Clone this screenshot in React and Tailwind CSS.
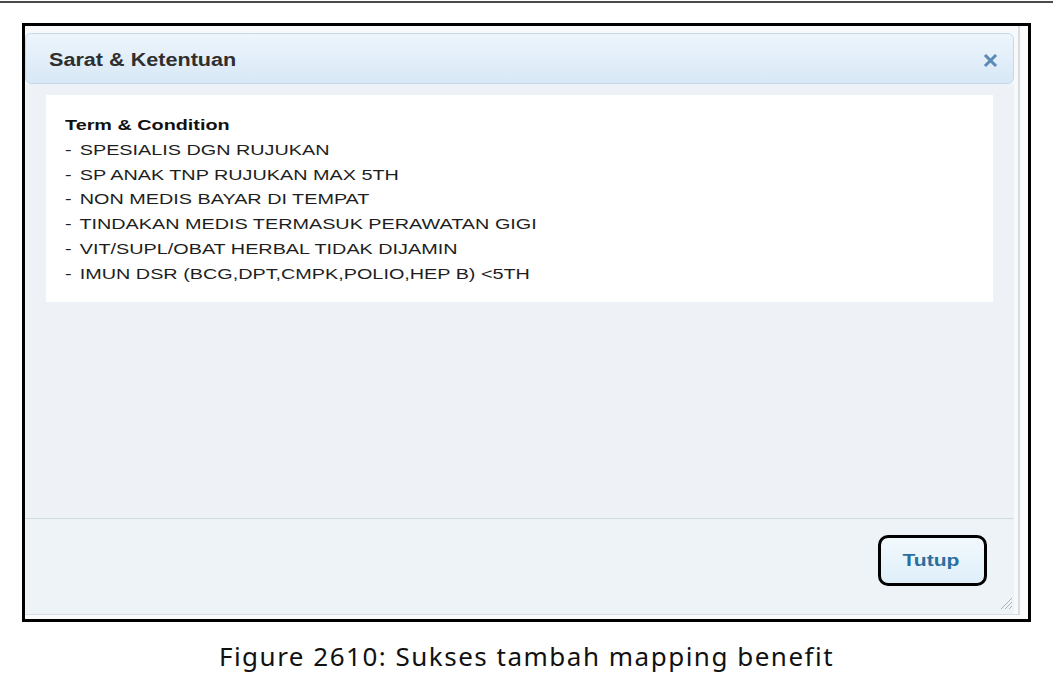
const TERMS = [
  "SPESIALIS DGN RUJUKAN",
  "SP ANAK TNP RUJUKAN MAX 5TH",
  "NON MEDIS BAYAR DI TEMPAT",
  "TINDAKAN MEDIS TERMASUK PERAWATAN GIGI",
  "VIT/SUPL/OBAT HERBAL TIDAK DIJAMIN",
  "IMUN DSR (BCG,DPT,CMPK,POLIO,HEP B) <5TH",
];

function CloseIcon() {
  return (
    <svg width="15" height="15" viewBox="0 0 15 15">
      <path d="M3 3 L12 12 M12 3 L3 12" stroke="#5b8ab5" strokeWidth="3" strokeLinecap="square" />
    </svg>
  );
}

function ResizeGrip() {
  return (
    <svg width="16" height="16" viewBox="0 0 16 16">
      <path d="M15 4 L4 15 M15 8 L8 15 M15 12 L12 15" stroke="#a9b3bc" strokeWidth="1" />
    </svg>
  );
}

function Dialog() {
  return (
    <div className="flex h-[589px] w-[995px] flex-col border-r-[2px] border-b border-[#d9dde1] bg-[#f7f9fb] pt-[7px] pr-[4px]">
      <div className="flex h-[51px] items-center justify-between rounded-[6px] border border-[#c5d9ea] bg-gradient-to-b from-[#edf5fc] to-[#d8e8f6] pt-[3px] pl-[23px] pr-[15px]">
        <span className="inline-block origin-left scale-x-[1.2] text-[18px] font-bold text-[#2f2f2f]">
          Sarat &amp; Ketentuan
        </span>
        <CloseIcon />
      </div>

      <div className="h-[434px] bg-[#eef2f6] px-[21px] pt-[11px]">
        <div className="h-[207px] bg-white pl-[19px] pt-[18px]">
          <div className="origin-left scale-x-[1.32] text-[15px] leading-[24.8px] text-[#1e1e1e]">
            <div className="font-bold text-[#111]">Term &amp; Condition</div>
            {TERMS.map((t) => (
              <div key={t}>
                <span className="mr-[2px]">-</span> {t}
              </div>
            ))}
          </div>
        </div>
      </div>

      <div className="relative flex flex-1 items-start justify-end border-t border-[#d2dae1] bg-[#eef3f7] pt-[16px] pr-[27px]">
        <button className="h-[51px] w-[109px] rounded-[10px] border-[3px] border-black bg-gradient-to-b from-[#f2f9fd] to-[#dfeff9] pr-[3px] text-[17px] font-bold text-[#2a6f9e]">
          <span className="inline-block scale-x-[1.24]">Tutup</span>
        </button>
        <div className="absolute right-[1px] bottom-[4px]">
          <ResizeGrip />
        </div>
      </div>
    </div>
  );
}

export default function App() {
  return (
    <div className="h-[695px] w-[1053px] overflow-hidden bg-white font-['Liberation_Sans',Arial,sans-serif]">
      <div className="mt-[1px] h-[2px] bg-[#4a4a4a]" />
      <div className="mt-[20px] ml-[22px] flex h-[599px] w-[1009px] border-[3px] border-black bg-[#fafbfc]">
        <Dialog />
      </div>
      <p className="mt-[16px] text-center font-['Noto_Sans',sans-serif] text-[26px] leading-[36px] tracking-[1.5px] text-[#111]">
        Figure 2610: Sukses tambah mapping benefit
      </p>
    </div>
  );
}
